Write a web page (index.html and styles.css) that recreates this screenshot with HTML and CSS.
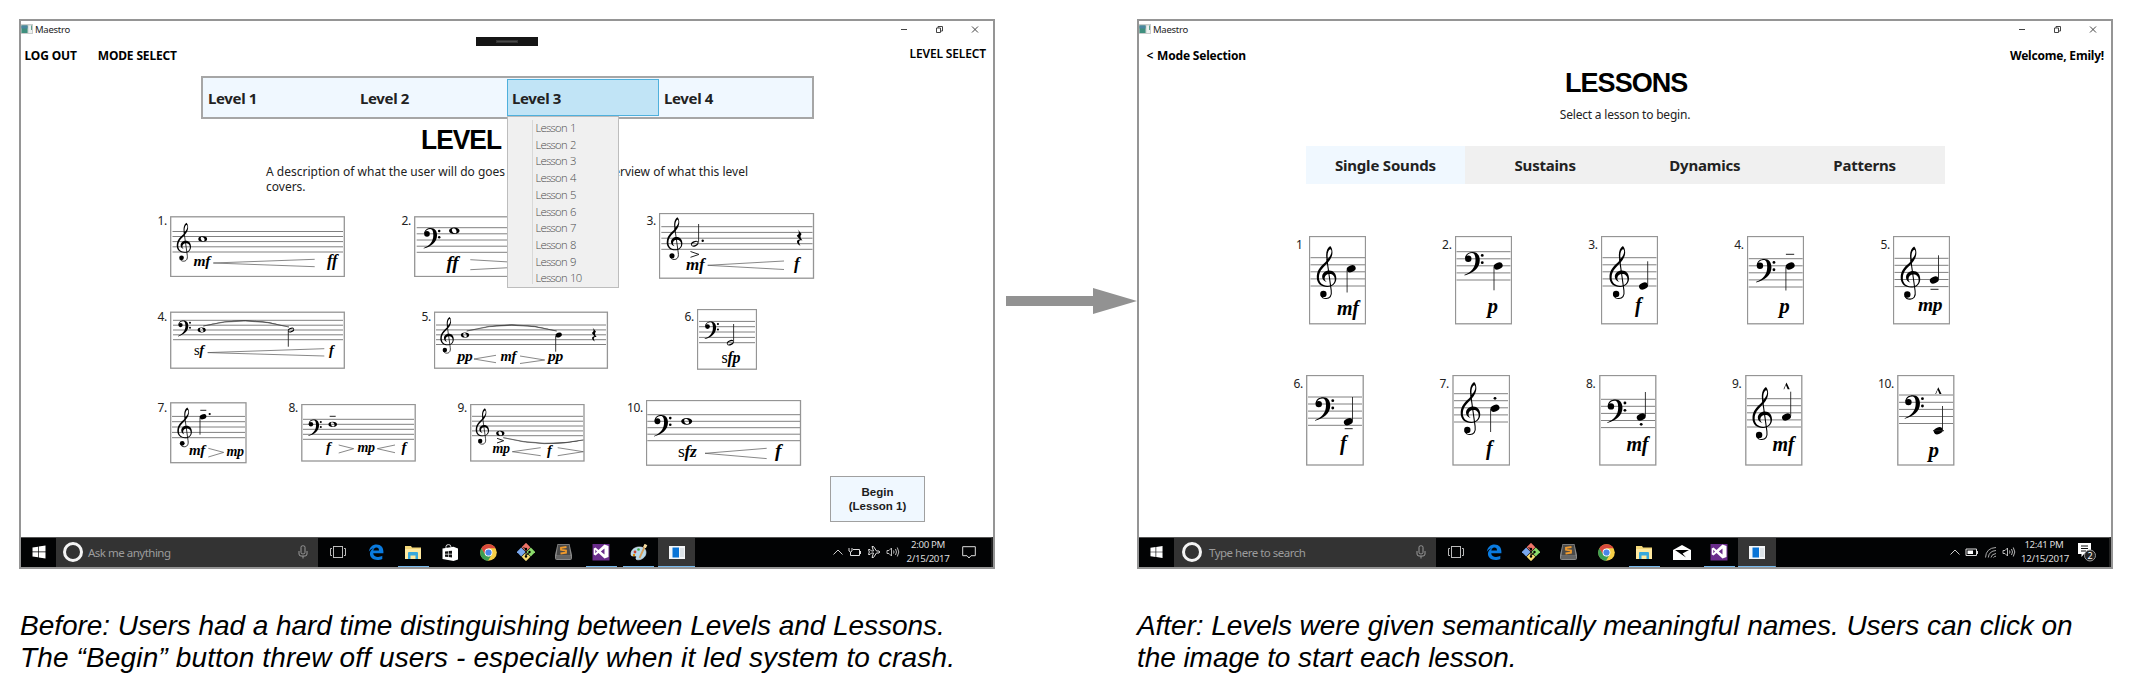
FILE: index.html
```html
<!DOCTYPE html>
<html lang="en">
<head>
<meta charset="utf-8">
<title>Maestro: before and after</title>
<link rel="stylesheet" href="styles.css">
</head>
<body>
<svg class="defs" aria-hidden="true">
  <defs>
    <!-- Notation glyphs: ten units per staff space, y = 0 on the top staff line -->
    <g id="treble">
      <path fill-rule="evenodd" d="M14 4C11.800 -6 14 -13.500 18.900 -16.500C22.500 -13 23 -6 20.500 -.5C18.500 5 13 9.500 8.500 14.500C4.500 19 3 23 3 28C3 35.500 8.500 39.700 15.500 39.700C21.500 39.700 25.300 36 25.300 30.500C25.300 25.500 22.200 22.800 18 22.800C13.500 22.800 11 25.500 11 29C11 31.500 12.300 33.300 14.500 34.500C9.800 33.500 7.500 30.500 7.500 27C7.500 21.500 12 18 17.500 18C23.500 18 27.500 22.500 27.500 29C27.500 36.500 22.500 41.300 14.600 41.300C6 41.300 0 36 0 27.500C0 20 3 15.500 7 11C10 8 13 6 14 4ZM15.500 1.500C18.500 -1.500 20.800 -5.500 20.600 -9C20.500 -11 20 -12 19 -12C16 -11 14.500 -5 15.500 1.500Z"/>
      <path d="M14.200 2L20.300 46C21.500 54 18 57.600 13 57.500C10 57.500 7 55.500 6 53" fill="none" stroke="#000" stroke-width="1.500"/>
      <circle cx="9.300" cy="51" r="4.500"/>
    </g>
    <g id="bass">
      <path d="M.8 10C.8 3 6 .3 11.500 .3C18 .3 21.500 5 21.500 12C21.500 23 12 30.500 0 33.500L0 32.600C9.500 29 15.500 22 15.500 12C15.500 5.500 14 2 10.500 2C6.500 2 3.500 4 2.500 7.500Z"/>
      <circle cx="5.300" cy="10" r="4.500"/><circle cx="25" cy="5.200" r="2"/><circle cx="25" cy="15.500" r="2"/>
    </g>
    <ellipse id="quarter" rx="6.600" ry="4.700" transform="rotate(-22)"/>
    <path id="half" fill-rule="evenodd" transform="rotate(-24)" d="M-6.800 0A6.800 4.700 0 1 1 6.800 0A6.800 4.700 0 1 1 -6.800 0ZM-5.600 0A5.600 2.300 0 1 0 5.600 0A5.600 2.300 0 1 0 -5.600 0Z"/>
    <path id="whole" fill-rule="evenodd" d="M-8.500 0A8.500 5.200 0 1 1 8.500 0A8.500 5.200 0 1 1 -8.500 0ZM-3.200 -3.200C-5 -1.500 -3 3.500 0 4.200C3 4.800 4.500 2.500 3.200 -.5C2 -3.600 -1 -5.200 -3.200 -3.200Z"/>
    <path id="rest" d="M-3 -15L4 -6.500C1 -3 1.500 0 5.500 5C0 3.500 -2.500 7 2 14C-5 10.500 -6.500 3.500 1 3L-4.500 -3.500C0 -7 .5 -9.500 -3 -15Z"/>
    <path id="marcato" d="M-3 3.200L0 -3.400L3.200 3.200H1.200L-.6 -1L-2.300 3.200Z"/>

    <symbol id="i-app" viewBox="0 0 12 10"><rect width="12" height="10" fill="#c9cccb"/><rect x=".5" y="1.500" width="6" height="7.500" fill="#3f8f7e"/><rect x=".5" y="1.500" width="6" height="3" fill="#4b86a0"/><rect x="7.500" y="1.500" width="3.500" height="7.500" fill="#eef1f0"/><path d="M10.500 1.500V6" stroke="#5fa18f"/></symbol>
    <symbol id="i-controls" viewBox="0 0 82 10"><g fill="none" stroke="#444" stroke-width="1"><path d="M0 5.500H6M35.500 4H39.500V8.500H35.500ZM37 4V2.500H41.500V7H39.500M71 2.500L77 8.500M77 2.500L71 8.500"/></g></symbol>
    <symbol id="i-win" viewBox="0 0 14 14"><path fill="#fff" d="M.5 2.500L6 1.700V6.600H.5ZM6.700 1.600L13.500 .5V6.600H6.700ZM.5 7.300H6V12.300L.5 11.500ZM6.700 7.300H13.500V13.500L6.700 12.400Z"/></symbol>
    <symbol id="i-mic" viewBox="0 0 10 14"><g fill="none" stroke="#999"><rect x="3" y=".8" width="4" height="8" rx="1.500"/><path d="M1 6V9Q1 11 3 11H7Q9 11 9 9V6M5 11V13.500"/></g></symbol>
    <symbol id="i-task" viewBox="0 0 16 12"><g fill="none" stroke="#bbb"><rect x="3.500" y=".5" width="9" height="11"/><path d="M2 2.500H.5V9.500H2M14 2.500H15.500V9.500H14"/></g></symbol>
    <symbol id="i-edge" viewBox="0 0 16 16"><path fill="#0a7be0" d="M.8 7.800C1.500 3 4.500 .4 8.600 .4C13 .4 15.400 3.500 15.400 7.500V9.300H5.200C5.500 12 7.500 13 10 13C11.800 13 13.200 12.500 14.300 11.800V15C12.800 15.700 11.300 16 9.400 16C5 16 1.900 13.500 1.900 9.800C1.900 7 3.500 5.200 5.800 4.200C3.500 4.500 1.900 6 .8 7.800ZM5.300 6.600H11C11 4.800 10.200 3.500 8.400 3.500C6.600 3.500 5.600 4.900 5.300 6.600Z"/></symbol>
    <symbol id="i-folder" viewBox="0 0 18 15"><path fill="#f3d87a" d="M1 1H7L8 2.500H17V14H1Z"/><path fill="#ffe9a0" d="M1 4H17V14H1Z"/><path fill="#38a9dd" d="M4 8Q4 7 5 7H13Q14 7 14 8V14H11.500V10.500H6.500V14H4Z"/></symbol>
    <symbol id="i-store" viewBox="0 0 17 17"><path fill="#fff" d="M.5 4.500L11.500 2.800L16 4.500V15.500L11.500 17L.5 15Z"/><path fill="none" stroke="#ddd" d="M4 4V2.500Q4 .6 6.500 .6Q9 .6 9 3"/><path fill="#111" d="M3 7.500L6 7.200V9.800H3ZM6.600 7.100L10 6.700V9.800H6.600ZM3 10.400H6V13L3 12.700ZM6.600 10.400H10V13.500L6.600 13.100Z"/></symbol>
    <symbol id="i-chrome" viewBox="-8.500 -8.500 17 17"><circle r="8.300" fill="#f7cf46"/><path fill="#d9493c" d="M-7.200 -4.200A8.300 8.300 0 0 1 7.200 -4.200H0L-3.700 2Z"/><path fill="#3c9e54" d="M-7.200 -4.200A8.300 8.300 0 0 0 -.5 8.300L3.300 2L0 4L-3.400 2Z"/><circle r="3.900" fill="#fff"/><circle r="3.100" fill="#4a86e8"/></symbol>
    <symbol id="i-git" viewBox="-9 -9 18 18"><g transform="rotate(45)"><rect x="-6.500" y="-6.500" width="6.200" height="6.200" fill="#ee7468"/><rect x=".3" y="-6.500" width="6.200" height="6.200" fill="#8bdb6b"/><rect x="-6.500" y=".3" width="6.200" height="6.200" fill="#79a8ee"/><rect x=".3" y=".3" width="6.200" height="6.200" fill="#f6dc72"/></g><path d="M0 4.500V-3.500M0 3Q3.500 2 3.500 0M-2.500 -4.500L0 -3" fill="none" stroke="#111"/><circle cy="-3" r="1.200"/><circle cx="3.500" r="1.200"/><circle cy="4.500" r="1.200"/></symbol>
    <symbol id="i-sublime" viewBox="0 0 17 16"><path fill="#8a8a8a" d="M2.500 0H14.500L17 11V14Q17 16 15 16H2Q0 16 0 14V11Z"/><path fill="#4a4a4a" d="M3 .8H14L15.500 11.500H1.500Z"/><path fill="#666" d="M1 12H16V15H1Z"/><path fill="none" stroke="#f09a2c" stroke-width="1.800" d="M11.500 3L6 3.800V5.800L11 6.500V8.700L5.500 9.500"/></symbol>
    <symbol id="i-vs" viewBox="0 0 18 18"><rect x=".5" y="1" width="17" height="16.500" fill="#6a2c8c"/><path fill="#fff" fill-rule="evenodd" d="M12.500 1.500L16.500 3V14L12.500 15.500L6.500 10L3.500 12.500L1.700 11.500V5.500L3.500 4.500L6.500 7ZM12.500 5.500L8.800 8.500L12.500 11.500ZM3.300 6.700V10.300L5 8.500Z"/></symbol>
    <symbol id="i-paint" viewBox="0 0 18 17"><path fill="#b6d9ec" stroke="#e9f2f6" stroke-width=".6" d="M1 10C1 5 6 2.500 10.500 3C15 3.500 17 7 15.500 11C14 15 9 16.500 6.500 15.500C5 15 7.500 12.500 5.500 12C3.500 11.700 1 13 1 10Z"/><circle cx="5" cy="8" r="1.400" fill="#c43"/><circle cx="8.500" cy="5.500" r="1.300" fill="#4a4"/><circle cx="4" cy="11" r="1.200" fill="#d80"/><path stroke="#d6a05e" stroke-width="1.800" d="M9.500 14L15.500 1"/><path stroke="#f6dca0" stroke-width="3" d="M14.500 3.500L16 .5"/></symbol>
    <symbol id="i-window" viewBox="0 0 16 13"><rect width="16" height="13" fill="#f4f6f8"/><rect x="3.500" y="1.500" width="6.500" height="10" fill="#0a74d6"/><rect x="11" y="2" width="4" height="9" fill="#dde3e8"/></symbol>
    <symbol id="i-mail" viewBox="0 0 18 15"><path fill="#fff" d="M0 5L9 0L18 5V15H0Z"/><path d="M2 5H16L9.500 8.500L13 12.500Z"/></symbol>
    <symbol id="i-chev" viewBox="0 0 10 6"><path d="M.5 5.500L5 1L9.500 5.500" fill="none" stroke="#ccc"/></symbol>
    <symbol id="i-plug" viewBox="0 0 14 10"><path d="M5 2.500H11.500V8.500H2.500V6M12.500 4V7" fill="none" stroke="#ddd"/><path d="M1 1V4Q2.500 6 4 4V1M2.500 5V7" fill="none" stroke="#ddd"/></symbol>
    <symbol id="i-batt" viewBox="0 0 14 10"><path d="M1 2H11.500V8.500H1Z M12.500 4V7" fill="none" stroke="#ddd"/><path fill="#fff" d="M2.500 3.500H8V7H2.500Z"/></symbol>
    <symbol id="i-plane" viewBox="0 0 14 14"><path d="M1.500 4.500H3L4.500 6H6.500L5 1.500H6.500L9.500 6H12Q13.500 7 12 8H9.500L6.500 12.500H5L6.500 8H4.500L3 9.500H1.500L2.300 7Z" fill="none" stroke="#ddd"/></symbol>
    <symbol id="i-vol" viewBox="0 0 14 12"><path d="M1 4.500H3L5.500 2V10L3 7.500H1ZM7.500 4.500Q8.500 6 7.500 7.500M9.500 3Q11.500 6 9.500 9M11.300 1.500Q14.300 6 11.300 10.500" fill="none" stroke="#ccc" stroke-width=".9"/></symbol>
    <symbol id="i-wifi" viewBox="0 0 13 12"><path d="M1.500 11.500Q2 2 12 1.500M4.300 11.500Q5 5 12 4.500M7 11.500Q7.500 8 12 7.500M9.500 11.500Q10 10.500 12 10.200" fill="none" stroke="#bbb" stroke-width=".9"/></symbol>
    <symbol id="i-note" viewBox="0 0 14 13"><path d="M.7 .7H13.300V9.700H9L7 12L5 9.700H.7Z" fill="none" stroke="#ddd"/></symbol>
  </defs>
</svg>

<main class="board">
  <section class="window">
    <header class="titlebar"><svg class="app"><use href="#i-app"/></svg><span>Maestro</span><svg class="controls"><use href="#i-controls"/></svg></header>
    <div class="recorder"><i></i></div>
    <nav class="menu"><a>LOG OUT</a><a>MODE SELECT</a><span class="level-select">LEVEL SELECT</span></nav>
    <div class="levels">
      <span>Level 1</span><span>Level 2</span>
      <span class="open">Level 3
        <ul class="dropdown"><li>Lesson 1</li><li>Lesson 2</li><li>Lesson 3</li><li>Lesson 4</li><li>Lesson 5</li><li>Lesson 6</li><li>Lesson 7</li><li>Lesson 8</li><li>Lesson 9</li><li>Lesson 10</li></ul>
      </span>
      <span>Level 4</span>
    </div>
    <h1 class="level-title">LEVEL</h1>
    <div class="intro"><p class="split"><span>A description of what the user will do goes here</span><span>overview of what this level</span></p><p>covers.</p></div>

    <div class="row row-a">
      <div class="lesson"><b>1.</b>
        <svg width="175" height="61" viewBox="170 215 175 61"><rect class="box" x="170.700" y="215.800" width="173.600" height="59.700"/><path class="staff" d="M172.500 230.500H343M172.500 235.500H343M172.500 240.600H343M172.500 245.800H343M172.500 251H343"/><use href="#treble" transform="translate(176.700 230.300) scale(.52)"/><use href="#whole" transform="translate(202.700 238) scale(.52)"/><path class="pin" d="M314.700 258.300L213.300 262L314.700 265.700"/><text x="193.500" y="264.700" font-size="15.500">mf</text><text x="327" y="265" font-size="16.500">ff</text></svg></div>
      <div class="lesson"><b>2.</b>
        <svg width="175" height="61" viewBox="414 215 175 61"><rect class="box" x="414.700" y="215.800" width="173.600" height="59.700"/><path class="staff" d="M416.700 226.700H587M416.700 232.800H587M416.700 239H587M416.700 245.200H587M416.700 251.300H587"/><use href="#bass" transform="translate(423.700 226.700) scale(.62)"/><use href="#whole" transform="translate(454.300 229.700) scale(.62)"/><path class="pin" d="M470.300 258.700L560 264L470.300 268.700"/><text x="446.500" y="268" font-size="19">ff</text></svg></div>
      <div class="lesson"><b>3.</b>
        <svg width="156" height="66" viewBox="659 213 156 66"><rect class="box" x="659.500" y="213.500" width="154" height="64.700"/><path class="staff" d="M661.300 226.700H812.500M661.300 232.400H812.500M661.300 238.200H812.500M661.300 243.700H812.500M661.300 249.300H812.500"/><use href="#treble" transform="translate(666.700 226.700) scale(.57)"/><use href="#half" transform="translate(694.700 243.700) scale(.57)"/><path class="stem" d="M698.600 242.500V224"/><circle cx="702.700" cy="240.700" r="1.200"/><path class="mark" d="M690.500 251.500L699 254.400L690.500 257.300"/><use href="#rest" transform="translate(799.300 237.700) scale(.57)"/><path class="pin" d="M784 261L707.700 265.300L784 269.500"/><text x="686" y="269.500" font-size="17">mf</text><text x="794" y="268.500" font-size="17">f</text></svg></div>
    </div>

    <div class="row row-b">
      <div class="lesson"><b>4.</b>
        <svg width="175" height="58" viewBox="170 310 175 58"><rect class="box" x="170.700" y="311.200" width="173.600" height="56"/><path class="staff" d="M173 319.300H343M173 324.200H343M173 329H343M173 333.800H343M173 338.700H343"/><use href="#bass" transform="translate(178 319.300) scale(.48)"/><use href="#whole" transform="translate(201.700 329) scale(.48)"/><use href="#half" transform="translate(291 329) scale(.48)"/><path class="stem" d="M288.300 330V345.700"/><path class="slur" d="M203.300 325Q245 313.500 289 326Q245 314.500 203.300 325Z"/><path class="pin" d="M324.300 347.700L207.700 351.600L324.300 355"/><text x="194" y="354" font-size="14.500"><tspan class="s">s</tspan>f</text><text x="329" y="353.700" font-size="14.500">f</text></svg></div>
      <div class="lesson"><b>5.</b>
        <svg width="175" height="58" viewBox="434 310 175 58"><rect class="box" x="434.500" y="311.200" width="172.900" height="56"/><path class="staff" d="M436 324H606M436 328.900H606M436 333.800H606M436 338.700H606M436 343.500H606"/><use href="#treble" transform="translate(440.300 324) scale(.49)"/><use href="#whole" transform="translate(465 334) scale(.49)"/><use href="#quarter" transform="translate(558.700 334) scale(.49)"/><path class="stem" d="M555.700 335V350.700"/><use href="#rest" transform="translate(594 333.700) scale(.48)"/><path class="slur" d="M466.700 330Q512 317.400 556.700 330Q512 318.500 466.700 330Z"/><path class="pin" d="M496 354.300L474 358L496 361.700M520 355L544.700 359L520 362.500"/><text x="457.500" y="359.500" font-size="15.500">pp</text><text x="500.500" y="360" font-size="14.500">mf</text><text x="548" y="359.500" font-size="15.500">pp</text></svg></div>
      <div class="lesson"><b>6.</b>
        <svg width="60" height="61" viewBox="697 309 60 61"><rect class="box" x="697.500" y="309.500" width="59" height="59.700"/><path class="staff" d="M699 321.400H755M699 326.700H755M699 332H755M699 337.400H755M699 342.700H755"/><use href="#bass" transform="translate(704.700 321.300) scale(.53)"/><use href="#half" transform="translate(730.300 342.700) scale(.53)"/><path class="stem" d="M733.600 341.500V324"/><text x="721.500" y="362.500" font-size="16"><tspan class="s">s</tspan>fp</text></svg></div>
    </div>

    <div class="row row-c">
      <div class="lesson"><b>7.</b>
        <svg width="77" height="62" viewBox="170 402 77 62"><rect class="box" x="170.700" y="402.800" width="75.300" height="59.900"/><path class="staff" d="M172 416.400H245M172 421.700H245M172 427H245M172 432.400H245M172 437.700H245"/><use href="#treble" transform="translate(177.300 416.300) scale(.53)"/><use href="#quarter" transform="translate(203 416.700) scale(.53)"/><path class="stem" d="M200 418V434.700"/><path class="mark" d="M200.300 410.300H206.300"/><circle cx="209.700" cy="414" r="1.100"/><path class="pin" d="M208.300 448.300L223.700 452.400L208.300 457"/><text x="189" y="455" font-size="15">mf</text><text x="226.500" y="455.500" font-size="14">mp</text></svg></div>
      <div class="lesson"><b>8.</b>
        <svg width="115" height="58" viewBox="301 404 115 58"><rect class="box" x="301.800" y="404.500" width="113.400" height="56.500"/><path class="staff" d="M303 419.300H414M303 424.300H414M303 429.300H414M303 434.300H414M303 439.300H414"/><use href="#bass" transform="translate(308.300 419.300) scale(.5)"/><use href="#whole" transform="translate(332.700 424.300) scale(.5)"/><path class="mark" d="M329.700 416.300H335.700"/><path class="pin" d="M338.700 445L353.700 448.700L338.700 453M395 445L377.300 448.700L395 452.700"/><text x="326" y="452" font-size="15">f</text><text x="357.500" y="452" font-size="14">mp</text><text x="401.500" y="452" font-size="15">f</text></svg></div>
      <div class="lesson"><b>9.</b>
        <svg width="115" height="58" viewBox="470 404 115 58"><rect class="box" x="470.700" y="404.500" width="113.300" height="56.500"/><path class="staff" d="M472 416.300H583M472 421.200H583M472 426H583M472 430.900H583M472 435.700H583"/><use href="#treble" transform="translate(475.700 416.300) scale(.485)"/><use href="#whole" transform="translate(500.300 433.300) scale(.49)"/><path class="mark" d="M497 438.300L503.700 440.700L497 443"/><path class="slur" d="M503.300 437.700Q545 448.500 583.300 440Q545 447.500 503.300 437.700Z"/><path class="pin" d="M540.700 447.700L512.300 451.700L540.700 455.700M557.700 447.700L583.300 451.700L557.700 455.700"/><text x="492.500" y="452.500" font-size="14">mp</text><text x="547" y="454.500" font-size="14.500">f</text></svg></div>
      <div class="lesson"><b>10.</b>
        <svg width="156" height="66" viewBox="646 400 156 66"><rect class="box" x="646.500" y="400.500" width="154" height="64.700"/><path class="staff" d="M647.300 414.700H800M647.300 421.300H800M647.300 427.700H800M647.300 434.200H800M647.300 440.700H800"/><use href="#bass" transform="translate(654 414.700) scale(.65)"/><use href="#whole" transform="translate(686.700 421.300) scale(.65)"/><path class="pin" d="M766.700 448.300L705 453.300L766.700 458.600"/><text x="678" y="456.500" font-size="17.500"><tspan class="s">s</tspan>fz</text><text x="775" y="456.500" font-size="19.500">f</text></svg></div>
    </div>

    <button class="begin">Begin<br>(Lesson 1)</button>

    <footer class="taskbar">
      <span class="start"><svg width="14" height="14"><use href="#i-win"/></svg></span>
      <span class="search"><i class="ring"></i><span class="ask">Ask me anything</span><svg class="mic" width="10" height="14"><use href="#i-mic"/></svg></span>
      <span class="view"><svg width="16" height="12"><use href="#i-task"/></svg></span>
      <span class="task"><svg width="16" height="16"><use href="#i-edge"/></svg></span>
      <span class="task run"><svg width="18" height="15"><use href="#i-folder"/></svg></span>
      <span class="task"><svg width="17" height="17"><use href="#i-store"/></svg></span>
      <span class="task"><svg width="17" height="17"><use href="#i-chrome"/></svg></span>
      <span class="task"><svg width="18" height="18"><use href="#i-git"/></svg></span>
      <span class="task"><svg width="17" height="16"><use href="#i-sublime"/></svg></span>
      <span class="task run"><svg width="18" height="18"><use href="#i-vs"/></svg></span>
      <span class="task run"><svg width="18" height="17"><use href="#i-paint"/></svg></span>
      <span class="task active"><svg width="16" height="13"><use href="#i-window"/></svg></span>
      <span class="tray">
        <svg width="10" height="6"><use href="#i-chev"/></svg>
        <svg width="14" height="10"><use href="#i-plug"/></svg>
        <svg width="14" height="14"><use href="#i-plane"/></svg>
        <svg width="14" height="12"><use href="#i-vol"/></svg>
        <span class="clock">2:00 PM<br>2/15/2017</span>
        <svg class="notes" width="14" height="13"><use href="#i-note"/></svg>
      </span>
    </footer>
  </section>

  <svg class="arrow" viewBox="0 0 142 26"><path fill="#929292" d="M11 8H98V0L142 13L98 26V18H11Z"/></svg>

  <section class="window after-window">
    <header class="titlebar"><svg class="app"><use href="#i-app"/></svg><span>Maestro</span><svg class="controls"><use href="#i-controls"/></svg></header>
    <nav class="menu"><a class="back"><span class="lt">&lt;</span> Mode Selection</a><span class="welcome">Welcome, Emily!</span></nav>
    <h1 class="lessons-title">LESSONS</h1>
    <p class="hint">Select a lesson to begin.</p>
    <div class="tabs"><span class="on">Single Sounds</span><span>Sustains</span><span>Dynamics</span><span>Patterns</span></div>

    <div class="row row-d">
      <div class="lesson"><b>1&nbsp;</b>
        <svg width="57" height="89" viewBox="1309.500 236 57 89"><rect class="box" x="1310" y="236.500" width="56" height="87.300"/><path class="staff" d="M1311 257.700H1365.500M1311 264.800H1365.500M1311 271.800H1365.500M1311 278.900H1365.500M1311 286H1365.500"/><use href="#treble" transform="translate(1317.300 257.700) scale(.71)"/><use href="#quarter" transform="translate(1351.700 268.700) scale(.7)"/><path class="stem" d="M1347.600 270V292.500"/><text x="1337.500" y="315" font-size="20">mf</text></svg></div>
      <div class="lesson"><b>2.</b>
        <svg width="57" height="89" viewBox="1455.500 236 57 89"><rect class="box" x="1456" y="236.500" width="56" height="87.300"/><path class="staff" d="M1457 251.700H1511M1457 258.800H1511M1457 265.800H1511M1457 272.900H1511M1457 280H1511"/><use href="#bass" transform="translate(1465 251.700) scale(.71)"/><use href="#quarter" transform="translate(1498.700 266) scale(.7)"/><path class="stem" d="M1494.500 267V290.300"/><text x="1488" y="312.500" font-size="21">p</text></svg></div>
      <div class="lesson"><b>3.</b>
        <svg width="57" height="89" viewBox="1601.500 236 57 89"><rect class="box" x="1602" y="236.500" width="56" height="87.300"/><path class="staff" d="M1603 257.700H1657M1603 264.800H1657M1603 271.800H1657M1603 278.900H1657M1603 286H1657"/><use href="#treble" transform="translate(1610 257.700) scale(.71)"/><use href="#quarter" transform="translate(1644 286) scale(.7)"/><path class="stem" d="M1648.200 285V261.300"/><text x="1635.500" y="312" font-size="20">f</text></svg></div>
      <div class="lesson"><b>4.</b>
        <svg width="57" height="89" viewBox="1747.800 236 57 89"><rect class="box" x="1748.300" y="236.500" width="56" height="87.300"/><path class="staff" d="M1749.500 258.700H1803.500M1749.500 265.800H1803.500M1749.500 272.800H1803.500M1749.500 279.900H1803.500M1749.500 287H1803.500"/><use href="#bass" transform="translate(1757 258.700) scale(.71)"/><use href="#quarter" transform="translate(1791 266) scale(.7)"/><path class="stem" d="M1786.700 267V290.500"/><path class="mark" d="M1786.700 254.300H1795"/><text x="1780" y="312.500" font-size="21">p</text></svg></div>
      <div class="lesson"><b>5.</b>
        <svg width="57" height="89" viewBox="1894 236 57 89"><rect class="box" x="1894.500" y="236.500" width="56" height="87.300"/><path class="staff" d="M1895.500 258.300H1949.500M1895.500 265.300H1949.500M1895.500 272.400H1949.500M1895.500 279.500H1949.500M1895.500 286.600H1949.500"/><use href="#treble" transform="translate(1901.700 258.300) scale(.71)"/><use href="#quarter" transform="translate(1935.300 280) scale(.7)"/><path class="stem" d="M1939.500 279V255.300"/><path class="mark" d="M1931.500 289.300H1939.500"/><text x="1919" y="311" font-size="19.500">mp</text></svg></div>
    </div>

    <div class="row row-e">
      <div class="lesson"><b>6.</b>
        <svg width="58" height="91" viewBox="1307 375 58 91"><rect class="box" x="1307.700" y="375.500" width="56.500" height="89.500"/><path class="staff" d="M1309 397H1363M1309 404H1363M1309 411.100H1363M1309 418.200H1363M1309 425.300H1363"/><use href="#bass" transform="translate(1316 397) scale(.71)"/><use href="#quarter" transform="translate(1349.300 421.700) scale(.7)"/><path class="stem" d="M1353.500 421V397"/><path class="mark" d="M1345.700 428.700H1353.700"/><text x="1341" y="449.500" font-size="20">f</text></svg></div>
      <div class="lesson"><b>7.</b>
        <svg width="58" height="91" viewBox="1453 375 58 91"><rect class="box" x="1454" y="375.500" width="56.500" height="89.500"/><path class="staff" d="M1455 393.700H1509M1455 400.700H1509M1455 407.800H1509M1455 414.900H1509M1455 422H1509"/><use href="#treble" transform="translate(1461.700 393.700) scale(.71)"/><use href="#quarter" transform="translate(1496 408.300) scale(.7)"/><path class="stem" d="M1491.600 409V432"/><circle cx="1496" cy="398.300" r="1.400"/><text x="1487" y="454.700" font-size="20">f</text></svg></div>
      <div class="lesson"><b>8.</b>
        <svg width="58" height="91" viewBox="1599.500 375 58 91"><rect class="box" x="1600.300" y="375.500" width="56" height="89.500"/><path class="staff" d="M1601.500 399.300H1655.500M1601.500 406.300H1655.500M1601.500 413.400H1655.500M1601.500 420.500H1655.500M1601.500 427.600H1655.500"/><use href="#bass" transform="translate(1607.700 399.300) scale(.71)"/><use href="#quarter" transform="translate(1641.700 417) scale(.7)"/><path class="stem" d="M1645.900 416V392"/><circle cx="1641.700" cy="424.300" r="1.400"/><text x="1627" y="451" font-size="20">mf</text></svg></div>
      <div class="lesson"><b>9.</b>
        <svg width="58" height="91" viewBox="1745.500 375 58 91"><rect class="box" x="1746.300" y="375.500" width="56" height="89.500"/><path class="staff" d="M1747.500 398.700H1801.500M1747.500 405.700H1801.500M1747.500 412.800H1801.500M1747.500 419.900H1801.500M1747.500 427H1801.500"/><use href="#treble" transform="translate(1753 398.700) scale(.71)"/><use href="#quarter" transform="translate(1787 417) scale(.7)"/><path class="stem" d="M1791.200 416V391.700"/><use href="#marcato" transform="translate(1787 386)"/><text x="1773" y="451" font-size="20">mf</text></svg></div>
      <div class="lesson"><b>10.</b>
        <svg width="58" height="91" viewBox="1898 375 58 91"><rect class="box" x="1898.800" y="375.500" width="56" height="89.500"/><path class="staff" d="M1900 395H1954M1900 402.300H1954M1900 409.400H1954M1900 416.500H1954M1900 423.500H1954"/><use href="#bass" transform="translate(1905.700 395) scale(.71)"/><use href="#quarter" transform="translate(1939.300 430.700) scale(.7)"/><path class="mark" d="M1934 430.700H1945"/><path class="stem" d="M1943.500 430V406"/><use href="#marcato" transform="translate(1939.300 390.700)"/><text x="1929.500" y="456.500" font-size="21">p</text></svg></div>
    </div>

    <footer class="taskbar plain">
      <span class="start"><svg width="13" height="14"><use href="#i-win"/></svg></span>
      <span class="search"><i class="ring"></i><span class="ask">Type here to search</span><svg class="mic" width="10" height="14"><use href="#i-mic"/></svg></span>
      <span class="view"><svg width="16" height="12"><use href="#i-task"/></svg></span>
      <span class="task"><svg width="16" height="16"><use href="#i-edge"/></svg></span>
      <span class="task"><svg width="18" height="18"><use href="#i-git"/></svg></span>
      <span class="task"><svg width="17" height="16"><use href="#i-sublime"/></svg></span>
      <span class="task"><svg width="17" height="17"><use href="#i-chrome"/></svg></span>
      <span class="task run"><svg width="18" height="15"><use href="#i-folder"/></svg></span>
      <span class="task"><svg width="18" height="15"><use href="#i-mail"/></svg></span>
      <span class="task run"><svg width="18" height="18"><use href="#i-vs"/></svg></span>
      <span class="task active"><svg width="16" height="13"><use href="#i-window"/></svg></span>
      <span class="tray">
        <svg width="10" height="6"><use href="#i-chev"/></svg>
        <svg width="14" height="10"><use href="#i-batt"/></svg>
        <svg width="13" height="12"><use href="#i-wifi"/></svg>
        <svg width="14" height="12"><use href="#i-vol"/></svg>
        <span class="clock">12:41 PM<br>12/15/2017</span>
        <svg class="badge" width="18" height="19" viewBox="0 0 18 19"><path fill="#fff" d="M0 0H13V11H6L3.500 14V11H0Z"/><path stroke="#111" d="M3 3H10M3 5.500H10M3 8H8"/><circle cx="12" cy="12.500" r="5.500" fill="#222" stroke="#999"/><text class="count" x="12" y="15.800">2</text></svg>
      </span>
    </footer>
  </section>

  <p class="caption">Before: Users had a hard time distinguishing between Levels and Lessons.<br><span class="loose">The “Begin” button threw off users - especially when it led system to crash.</span></p>
  <p class="caption after">After: Levels were given semantically meaningful names. Users can click on<br>the image to start each lesson.</p>
</main>
</body>
</html>
```
FILE: styles.css
```css
* { box-sizing: border-box; }
body { margin: 0; background: #fff; color: #000; font-family: "Noto Sans", "Open Sans", sans-serif; font-size: 12px; }
p, h1, ul { margin: 0; padding: 0; font-weight: 400; list-style: none; }
svg { display: block; flex: none; }
.defs { position: absolute; width: 0; height: 0; }

.board { display: grid; grid-template-columns: 976px 142px 976px; grid-template-rows: 550px auto; padding: 19px 0 0 19px; width: 2130px; height: 692px; overflow: hidden; }
.window { position: relative; display: flex; flex-direction: column; border: 2px solid #959595; background: #fff; }
.arrow { width: 142px; height: 26px; margin-top: 269px; }

.titlebar { display: flex; align-items: center; height: 16px; font-size: 9.5px; color: #222; letter-spacing: -.25px; }
.titlebar .app { width: 12px; height: 10px; margin-right: 2px; }
.titlebar .controls { width: 82px; height: 10px; margin-left: auto; margin-right: 10px; }
.recorder { position: absolute; left: 455px; top: 16px; width: 62px; height: 9px; background: #151515; padding: 3px 20px; }
.recorder i { display: block; height: 3px; background: #4a4a4a; border: 1px solid #333; }

.menu { display: flex; align-items: center; height: 17px; margin-top: 10px; padding: 0 7px 0 3.500px; font-size: 12px; font-weight: 700; letter-spacing: -.15px; white-space: nowrap; }
.menu a { margin-right: 21px; }
.level-select { margin: -4px 0 0 auto; font-weight: 600; }
.menu .back { margin-left: 4px; letter-spacing: -.2px; }
.lt { font-weight: 600; margin-right: 1px; }
.welcome { margin-left: auto; letter-spacing: -.2px; }

.levels { display: grid; grid-template-columns: 152px 152px 152px 1fr; width: 613px; height: 43px; margin: 12px 0 0 180px; border: 2px solid #a6a6a6; padding: 1px 0; background: #f0f8ff; font-size: 15px; font-weight: 700; color: #222; letter-spacing: -.35px; }
.levels > span { position: relative; display: flex; align-items: center; padding-left: 5px; }
.levels .open { background: #c1e4f6; border: 1px solid #4fb0dc; padding-left: 4px; }
.dropdown { position: absolute; z-index: 2; left: -1px; top: 36px; width: 112px; height: 172px; padding: 3px 0 3px 27.500px; background: linear-gradient(#d8d8d8, #d8d8d8) 24px 3px / 1px 164px no-repeat #f0f0f0; border: 1px solid #bdbdbd; font: 300 11.3px/16.7px "Open Sans", "Noto Sans", sans-serif; color: #4c4c4c; letter-spacing: -.75px; word-spacing: 1px; }

.level-title, .lessons-title { font: 700 28px/32px "Liberation Sans", Arial, sans-serif; transform-origin: left; letter-spacing: -1px; }
.level-title { margin: 5px 0 0 400px; height: 32px; transform: scaleX(.94); }
.intro { width: 482px; margin: 9px 0 0 245px; line-height: 14.500px; color: #222; }
.split { display: flex; justify-content: space-between; white-space: nowrap; }

.row { display: grid; }
.row-a { grid-template-columns: 244px 245px 200px; height: 66px; margin: 19px 0 0 129px; }
.row-b { grid-template-columns: 264px 263px 100px; height: 61px; margin: 30px 0 0 129px; }
.row-c { grid-template-columns: 131px 169px 176px 200px; height: 66px; margin: 30px 0 0 129px; }
.row-d { grid-template-columns: repeat(5, 146.100px); height: 89px; margin: 52px 0 0 149.500px; }
.row-e { grid-template-columns: 146px 146.500px 146px 152.500px 80px; height: 91px; margin: 49.500px 0 0 147px; }
.lesson { display: grid; grid-template-columns: 20px auto; justify-content: start; align-items: center; }
.lesson b { display: flex; justify-content: flex-end; align-self: start; font-weight: 400; line-height: 16px; padding-right: 3px; color: #222; letter-spacing: -.3px; white-space: nowrap; }
.row-d b, .row-e b { padding-top: 1px; }
.lesson text { font-family: "Liberation Serif", "Times New Roman", serif; font-weight: 700; font-style: italic; letter-spacing: -.3px; }
.lesson .s { font-style: normal; font-weight: 400; }
.box { fill: #fff; stroke: #959595; stroke-width: 1.300; }
.staff { fill: none; stroke: #808080; stroke-width: 1; }
.stem { fill: none; stroke: #222; stroke-width: .9; }
.mark { fill: none; stroke: #222; stroke-width: 1; }
.pin { fill: none; stroke: #555; stroke-width: .7; }
.slur { fill: #333; stroke: #333; stroke-width: .5; }

.begin { width: 95px; height: 46px; margin: 9.500px 0 0 809px; padding: 0; border: 1px solid #a0a0a0; background: #f0f8ff; font: 700 11.5px/14px "Liberation Sans", Arial, sans-serif; color: #1c1c1c; }

.lessons-title { margin: 3px 0 0 425.500px; height: 32px; transform: scaleX(.965); }
.hint { margin-top: 8px; text-align: center; line-height: 16px; color: #222; letter-spacing: -.2px; }
.tabs { display: grid; grid-template-columns: repeat(4, 1fr); width: 639px; height: 38px; margin: 23px 0 0 166.500px; background: #f0f0f0; font-size: 15px; font-weight: 700; color: #222; letter-spacing: -.2px; }
.tabs span { display: flex; align-items: center; justify-content: center; }
.tabs .on { background: #f0f8ff; }

.taskbar { display: flex; height: 30px; margin-top: auto; background: #020304; border-top: 1px solid #555; border-right: 2px solid #222; color: #ddd; }
.taskbar > span { display: flex; align-items: center; justify-content: center; padding-bottom: 1px; }
.taskbar .start { width: 35px; }
.taskbar .search { width: 262px; background: #333; justify-content: flex-start; padding: 0 10px 1px 7px; }
.ring { width: 20px; height: 20px; border: 3px solid #f4f4f4; border-radius: 50%; }
.ask { margin-left: 5px; color: #9c9c9c; font-size: 11.500px; letter-spacing: -.5px; }
.plain .search { padding-left: 8px; }
.plain .ask { margin-left: 7px; }
.mic { margin-left: auto; }
.taskbar .view { width: 39px; }
.taskbar .task { width: 37.600px; }
.taskbar .run { background: linear-gradient(#76b9ed, #76b9ed) center bottom / 31px 1px no-repeat; }
.taskbar .active { background: linear-gradient(#76b9ed, #76b9ed) center bottom / 100% 1px no-repeat #363636; }
.taskbar .tray { margin-left: auto; gap: 5px; padding-right: 15px; }
.clock { width: 46px; display: block; text-align: center; font-size: 9.700px; line-height: 14px; letter-spacing: -.35px; margin-right: 6px; white-space: nowrap; }
.taskbar.plain .tray { padding-right: 13px; }
.badge .count { fill: #fff; font-size: 9px; text-anchor: middle; }

.caption { grid-row: 2; grid-column: 1; margin: 41px 0 0 1px; font: italic 28px/32px "Liberation Sans", Arial, sans-serif; letter-spacing: -.04px; white-space: nowrap; }
.loose { letter-spacing: .14px; }
.caption.after { grid-column: 3; margin-left: 0; letter-spacing: -.06px; }
```
